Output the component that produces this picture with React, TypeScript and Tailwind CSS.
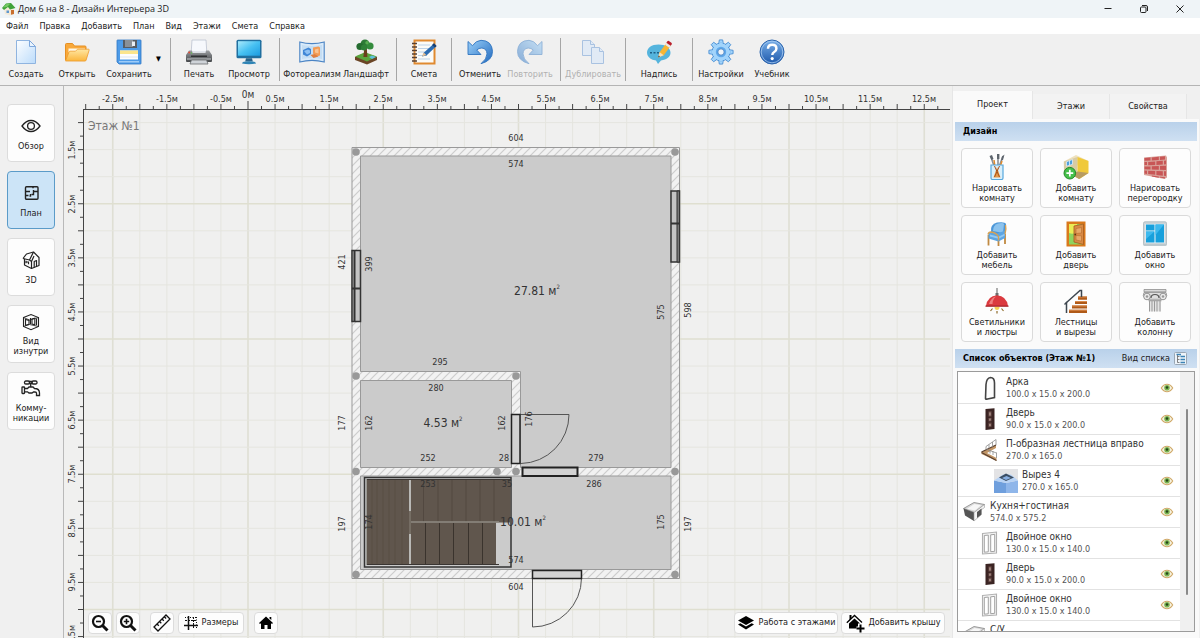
import { useState } from "react";
import type { ReactNode } from "react";
import clsx from "clsx";

const MENU = ["Файл", "Правка", "Добавить", "План", "Вид", "Этажи", "Смета", "Справка"];

/* ---------- toolbar icons ---------- */

function NewIcon() {
  return (
    <svg viewBox="0 0 26 26" className="size-[26px]">
      <defs>
        <linearGradient id="newG" x1="0" y1="0" x2="1" y2="1">
          <stop offset="0" stopColor="#fdfeff" />
          <stop offset="1" stopColor="#bcdcfb" />
        </linearGradient>
      </defs>
      <path d="M3.5 1.5h13l6 6v17h-19z" fill="url(#newG)" stroke="#8fb4e0" />
      <path d="M16.5 1.5v6h6z" fill="#eaf4fe" stroke="#7fa8dc" />
    </svg>
  );
}

function OpenIcon() {
  return (
    <svg viewBox="0 0 26 26" className="size-[26px]">
      <defs>
        <linearGradient id="openG" x1="0" y1="0" x2="0" y2="1">
          <stop offset="0" stopColor="#ffe7a3" />
          <stop offset="1" stopColor="#fbb53c" />
        </linearGradient>
      </defs>
      <path d="M1.500 21V5.500q0-1 1-1h6l2 2.500h10.500q1 0 1 1V12" fill="#f9a93a" stroke="#e58f23" />
      <path d="M4.500 9.500h16.500v4h-16.500z" fill="#fff8e6" />
      <path d="M1.500 22 5 13q.3-.8 1-.8h5.500l2-2h11q.9 0 .6 1l-3 10q-.3.900-1.200.900z" fill="url(#openG)" stroke="#ee9b2c" strokeWidth=".8" />
    </svg>
  );
}

function SaveIcon() {
  return (
    <svg viewBox="0 0 26 26" className="size-[26px]">
      <path d="M1 1.500q0-.5.5-.5h23q.5 0 .5.500v23q0 .5-.5.5H3l-2-2z" fill="#4d9be8" stroke="#2f76c4" strokeWidth=".8" />
      <path d="M7 1h14v8H7z" fill="#575c63" />
      <path d="M9 1h8v7H9z" fill="#8a9097" />
      <path d="M16 2.500h3V7h-3z" fill="#e9eef4" />
      <path d="M4 11.500h18v9H4z" fill="#fdfdfd" />
      <path d="M4 11.500h18v3.500H4z" fill="#fbe58c" />
      <path d="M4 17.500h18v1H4z" fill="#dfe6ee" />
      <path d="M3 22h20v1.500H3z" fill="#9ecbf7" />
    </svg>
  );
}

function PrintIcon() {
  return (
    <svg viewBox="0 0 26 26" className="size-[26px]">
      <defs>
        <linearGradient id="prG" x1="0" y1="0" x2="0" y2="1">
          <stop offset="0" stopColor="#9b9ea1" />
          <stop offset="1" stopColor="#45484b" />
        </linearGradient>
      </defs>
      <path d="M6 1h14l.8 12H5.200z" fill="#f6f8fc" stroke="#bcc3d0" strokeWidth=".8" />
      <path d="M3 11.500h3l.5 2.500h13l.5-2.500h3L26 16v6q0 1-1 1H1q-1 0-1-1v-6z" fill="url(#prG)" />
      <path d="M5 16.500h16v1.500H5z" fill="#2f3133" />
      <path d="M1 19.500h24v1H1z" fill="#c9cccf" />
      <path d="M5.500 21h15l1.500 4H4z" fill="#cfd3d8" stroke="#6a6d70" strokeWidth=".8" />
      <circle cx="3.200" cy="13.500" r="1" fill="#e24b35" />
      <circle cx="5.500" cy="14" r=".7" fill="#5cc24a" />
    </svg>
  );
}

function PreviewIcon() {
  return (
    <svg viewBox="0 0 26 26" className="size-[26px]">
      <defs>
        <linearGradient id="pvG" x1="0" y1="0" x2="1" y2="1">
          <stop offset="0" stopColor="#a9eafc" />
          <stop offset=".5" stopColor="#47c1f2" />
          <stop offset="1" stopColor="#1c9be0" />
        </linearGradient>
      </defs>
      <rect x=".5" y=".8" width="25" height="18.500" rx="1.500" fill="#206f9f" />
      <rect x="2" y="2.200" width="22" height="14.500" fill="url(#pvG)" />
      <path d="M10 19.300h6l.8 3.200H9.200z" fill="#2b6389" />
      <path d="M6 24.500q0-2.200 7-2.200t7 2.200q-7 1.500-14 0z" fill="#2f84b5" />
    </svg>
  );
}

function PhotoIcon() {
  return (
    <svg viewBox="0 0 26 26" className="size-[26px]">
      <path d="M.8 3q12.200 3.200 24.400 0v20q-12.200-3.200-24.400 0z" fill="#d8eafa" stroke="#4b84c4" strokeWidth="1.100" />
      <path d="M3 6q10 2 20 0v14q-10-2-20 0z" fill="#c5def4" />
      <path d="m4 11 5.500-2.500 2.500 1.500v5L8 17.500l-4-2z" fill="#3f86d6" />
      <path d="m5 12 4-1.500 2 1v2.500L8 15.500z" fill="#8dc0f3" />
      <path d="m14 8.500 5.500-1 1.500 1v8l-3.500 1-3.500-3z" fill="#f29b55" />
      <path d="m16 10.500 3.500-1v5l-3.500-1z" fill="#f9c493" />
      <path d="m11.500 16 4-1 4 2.500-5 1.500z" fill="#e07f40" />
    </svg>
  );
}

function LandscapeIcon() {
  return (
    <svg viewBox="0 0 26 26" className="size-[26px]">
      <path d="m2 18 10-4 12 4v3l-10 4.500L2 21z" fill="#6b4526" />
      <path d="m2 17.500 10-4.300 12 4.300-10 5z" fill="#5aa53d" />
      <path d="M11.300 9h2.500l.6 9h-4z" fill="#6b3f1d" />
      <circle cx="12" cy="5" r="4.500" fill="#2c7a36" />
      <circle cx="7" cy="7.500" r="3.600" fill="#246b2f" />
      <circle cx="17" cy="7" r="3.600" fill="#348b3d" />
      <circle cx="11" cy="8.500" r="3" fill="#2f8138" />
      <circle cx="14" cy="3.800" r="1.700" fill="#57ad52" />
      <path d="m16 18 3-1.500 4 1.500-4 2z" fill="#5cc0dd" />
    </svg>
  );
}

function EstimateIcon() {
  return (
    <svg viewBox="0 0 26 26" className="size-[26px]">
      <rect x="3.500" y="1.500" width="20" height="23" fill="#fbfbf8" stroke="#e08a30" strokeWidth="2" />
      <path d="M7 6h12M7 9.500h12M7 13h9M7 16.500h9M7 20h12" stroke="#bcd3ea" strokeWidth="1.200" />
      <g stroke="#574134" strokeWidth="1.300">
        <path d="M1 4.500h5M1 8h5M1 11.500h5M1 15h5M1 18.500h5M1 22h5" />
      </g>
      <path d="m11 17.500 2-4L23 4.500l2.500 2.500-10 9.500z" fill="#2d6db2" />
      <path d="m11 17.500 1.800-4 2.400 2.600z" fill="#ecc392" />
      <path d="m21 6 2-1.800L25.600 7 24 8.500z" fill="#173f73" />
    </svg>
  );
}

function UndoIcon({ flip }: { flip?: boolean }) {
  return (
    <svg viewBox="0 0 26 26" className={clsx("size-[26px]", flip && "-scale-x-100")}>
      <defs>
        <linearGradient id="undoG" x1="0" y1="0" x2="1" y2="1">
          <stop offset="0" stopColor="#9bd0f9" />
          <stop offset="1" stopColor="#1f68be" />
        </linearGradient>
      </defs>
      <path
        d="M1 2.500V15.500H14L9.700 11Q11.800 9 14.800 9 19.800 9.500 20 14.800 20 20 14 24.700 25.500 21.500 25.500 12.500 25 1.500 14 1.300 9 1.500 5.500 6.700z"
        fill="url(#undoG)"
        stroke="#2f74bf"
        strokeWidth=".9"
      />
    </svg>
  );
}

function DuplicateIcon() {
  return (
    <svg viewBox="0 0 26 26" className="size-[26px]">
      <g fill="#d3e6fa" stroke="#6496d4">
        <path d="M2.500 1.500h8l4 4v11h-12z" />
        <path d="M10.500 1.500v4h4" />
        <path d="M11.500 8.500h8l4 4v12h-12z" />
        <path d="M19.500 8.500v4h4" />
      </g>
    </svg>
  );
}

function CaptionIcon() {
  return (
    <svg viewBox="0 0 26 26" className="size-[26px]">
      <path d="M12.500 5.500C5.500 5.500 1 9 1 13.800c0 3 2.200 5.500 5.500 6.900l3.500.8 2 3.500 3-3.600c6-.8 9.500-3.600 9.500-7.600 0-4.800-5-8.300-12-8.300z" fill="#55b4dd" />
      <path d="M4 13h2v1.600H4zM7.500 13h2v1.600h-2zM11 13h2v1.600h-2z" fill="#1f5f86" />
      <path d="m12 18.500 1.700-5.200 6.800-9.500 4.200 3-6.900 9.400z" fill="#f7b633" />
      <path d="m12 18.500 1.700-5.200 4 2.900z" fill="#f5dfba" />
      <path d="m12 18.500.7-2 1.300.9z" fill="#333" />
      <path d="m19 5.700 1.400-2 4.300 3-1.400 2z" fill="#e8e8ea" />
      <path d="m20.400 3.700 1-1.500q.7-.7 1.500-.2l2.500 1.700q.8.7.3 1.500l-1 1.500z" fill="#b91f2c" />
    </svg>
  );
}

function SettingsIcon() {
  const teeth = [0, 45, 90, 135, 180, 225, 270, 315];
  return (
    <svg viewBox="0 0 26 26" className="size-[26px]">
      {teeth.map((a) => (
        <path key={a} d="M10.700 5 11.300.9h3.400l.6 4.100z" fill="#a2d4fb" stroke="#4b90d4" strokeWidth=".9" transform={`rotate(${a} 13 13)`} />
      ))}
      <circle cx="13" cy="13" r="9" fill="#a2d4fb" stroke="#4b90d4" strokeWidth=".9" />
      {teeth.map((a) => (
        <path key={a} d="M11.300 3.500h3.400v3h-3.400z" fill="#a2d4fb" transform={`rotate(${a} 13 13)`} />
      ))}
      <circle cx="13" cy="13" r="5.200" fill="#5fa8ea" />
      <circle cx="13" cy="13" r="3.200" fill="#f0f4f8" stroke="#3578c0" strokeWidth=".8" />
    </svg>
  );
}

function HelpIcon() {
  return (
    <svg viewBox="0 0 26 26" className="size-[26px]">
      <defs>
        <linearGradient id="helpG" x1="0" y1="0" x2="0" y2="1">
          <stop offset="0" stopColor="#7ab0e8" />
          <stop offset="1" stopColor="#1d58ab" />
        </linearGradient>
      </defs>
      <circle cx="13" cy="13" r="12" fill="url(#helpG)" stroke="#2e66ae" />
      <circle cx="13" cy="13" r="10.800" fill="none" stroke="#a9cdf2" strokeWidth=".8" />
      <path d="M9 9.800q0-4 4.200-4t4.200 3.700q0 2.300-2.200 3.500-1.900 1-1.900 3" fill="none" stroke="#fff" strokeWidth="2.500" />
      <circle cx="13.200" cy="19.600" r="1.600" fill="#fff" />
    </svg>
  );
}

/* ---------- design panel icons ---------- */

function BrushesIcon() {
  return (
    <svg viewBox="0 0 26 26" className="size-[26px]">
      <path d="m10 12-3-9M14 12V3M15 13l4-11" stroke="#8a8f96" strokeWidth="1.600" />
      <path d="M5.500 2 8 1l1.500 4-2 1zM13 0h2.400v5H13zM18 2.500 20.500.500 19 6l-2 .5z" fill="#5e656d" />
      <path d="m11 13-1-7M16 13l2-6" stroke="#e08b2c" strokeWidth="1.500" />
      <path d="M7 11h12v13q0 1.500-1.500 1.500h-9Q7 25.500 7 24z" fill="#d9effb" stroke="#57a7dc" strokeWidth="1.200" />
      <path d="M9.500 23.500 13 13l3.500 10.500z" fill="#e69a4a" />
      <path d="m10.500 12 5 11M15.500 12l-5 11" stroke="#a8521c" strokeWidth="1" />
    </svg>
  );
}

function AddRoomIcon() {
  return (
    <svg viewBox="0 0 26 26" className="size-[26px]">
      <path d="M.8 7.500 13 1l12.500 6-11 4.500z" fill="#efe2bd" />
      <path d="M.8 7.500 14.500 3v17.500L9 24l-8-6z" fill="#d8cba4" />
      <path d="m14.500 3 11 4v12l-9 6-8-4.500 6-2.500z" fill="#f0c93a" />
      <path d="m14.500 17.500 11 1.500-9.500 6-8-4.500z" fill="#b79b62" />
      <path d="m3.500 7.800 6-2.300v4.800l-6 1.900z" fill="#4fa1dc" stroke="#e9f3fa" strokeWidth=".7" />
      <path d="M6.500 6.600v4.700" stroke="#e9f3fa" strokeWidth=".8" />
      <circle cx="6.800" cy="19.200" r="5.800" fill="#45c04a" stroke="#268a2b" />
      <path d="M6.800 15.800v6.800M3.400 19.200h6.800" stroke="#fff" strokeWidth="1.700" />
    </svg>
  );
}

function BricksIcon() {
  return (
    <svg viewBox="0 0 26 26" className="size-[26px]">
      <path d="m2 3.500 22-2 1 2v20l-2.500 1.500L2 21z" fill="#d9a29a" />
      <g fill="#c85656">
        <path d="m2.500 4 6-.5v3l-6 .3zM9.800 3.400l7-.6v3.200l-7 .5zM18 2.700l5-.5v3.300l-5 .4z" />
        <path d="m2.500 8 2.500-.1v3.200H2.500zM6.200 7.900l7-.5v3.500l-7 .3zM14.400 7.300l6.400-.5v3.700l-6.400.4zM22 6.700l2-.1v3.700l-2 .1z" />
        <path d="M2.500 12.400h6v3l-6-.2zM9.800 12.300l7-.3v3.700l-7-.2zM18 12l6-.3v4.200l-6-.1z" />
        <path d="m2.500 16.600 2.500.1V20l-2.500-.4zM6.200 16.800l7 .2v3.800l-7-.8zM14.400 17l6.400.2v4.500l-6.400-.8zM22 17.200l2 .1v4.600l-2-.2z" />
        <path d="m9.800 21.600 7 1v1.200l-7-1.300zM18 22.700l5 .6v1.300l-5-1z" />
      </g>
    </svg>
  );
}

function ArmchairIcon() {
  return (
    <svg viewBox="0 0 26 26" className="size-[26px]">
      <path d="M4.500 14v10.500M14.500 18.500V25M21 13v10" stroke="#c08a42" strokeWidth="1.800" />
      <path d="M7 11Q6 3 13 1.500q8-1.200 9 1.500l-1 11-8 3z" fill="#4c97d8" />
      <path d="M9 10q0-6 5-7.500 5.500-1 6 .5L19 12z" fill="#8cc3ee" />
      <path d="M4.500 12.500q2-2 5-1.500l4 1.500 7.500-3v7.500l-6.500 3.500-10-3z" fill="#5da5e2" />
      <path d="m6 13.500 8.500 2.200 6-3v2l-6 3-8.500-2.200z" fill="#94c9f2" />
      <path d="M4 13.500q.5-2.500 3-2.500 5 .5 7.500 4.500v4M21.500 4q1 4-.5 9" fill="none" stroke="#d7a154" strokeWidth="1.400" />
    </svg>
  );
}

function DoorAddIcon() {
  return (
    <svg viewBox="0 0 26 26" className="size-[26px]">
      <path d="M3.500.5h19v25h-19z" fill="#d9791c" />
      <path d="M6 3h14v20.500H6z" fill="#8fd35c" />
      <path d="M6 3h8v8q-4 3-8 1z" fill="#e9ec54" />
      <path d="m11 5 9.500-2v20.500L11 21z" fill="#d98a45" stroke="#a75c1e" strokeWidth=".8" />
      <path d="m13 7.500 5.500-1V12l-5.500.5zM13 14.500l5.500.300v5.400L13 19z" fill="#e8a768" stroke="#b76c2c" strokeWidth=".6" />
      <circle cx="12.300" cy="13.500" r=".9" fill="#5b3512" />
    </svg>
  );
}

function WindowAddIcon() {
  return (
    <svg viewBox="0 0 26 26" className="size-[26px]">
      <rect x="1.500" y=".8" width="23" height="23.500" rx="1.500" fill="#ccd5d9" stroke="#a9b5ba" strokeWidth=".8" />
      <rect x="3.500" y="3" width="19" height="19" fill="#eef4f7" />
      <path d="M4 3.500h8.500v6H4zM4 10.500h8.500v11H4zM13.500 3.500H22v18h-8.500z" fill="#17a0dc" />
      <path d="M4 10.500h8.500L4 18zM13.500 3.500H22L13.500 14z" fill="#3cb9ee" />
      <path d="M1.500 23h23v1.800h-23z" fill="#bcc8cd" />
    </svg>
  );
}

function LampIcon() {
  return (
    <svg viewBox="0 0 26 26" className="size-[26px]">
      <path d="M13 0v7" stroke="#8c8c8c" strokeWidth="1.400" />
      <path d="M11.500 5h3v3h-3z" fill="#6c6c6c" />
      <path d="M2 18Q3.500 8 13 7.300 22.500 8 24 18z" fill="#db3a3f" />
      <path d="M5 16q2-6.500 7-7.500-3.500 3-3.500 7.500z" fill="#ee7f7f" />
      <path d="M1.500 17.500h23v1.300h-23z" fill="#a62328" />
      <path d="M10.500 19h5q0 3-2.500 3t-2.500-3z" fill="#f5cf55" />
      <path d="M8.500 20.500 6.500 23M17.500 20.500l2 2.500M13 23v2.500" stroke="#8f6c2a" strokeWidth="1.200" />
    </svg>
  );
}

function StairsIcon() {
  return (
    <svg viewBox="0 0 26 26" className="size-[26px]">
      <path d="M15 8.500h9v3.200h-9zM12 13h12v3H12zM9 17.500h15v3H9zM6 21.800h18V25H6z" fill="#b05a18" />
      <path d="M15 8.500h9v.9h-9zM12 13h12v.9H12zM9 17.500h15v.9H9zM6 21.800h18v.9H6z" fill="#d98a4b" />
      <path d="M3.500 25V14.500L17 2.500h1.500V9" fill="none" stroke="#3e4750" strokeWidth="1.500" />
      <path d="m1.500 16.500 2.500-2.500" stroke="#3e4750" strokeWidth="1.500" />
    </svg>
  );
}

function ColumnIcon() {
  return (
    <svg viewBox="0 0 26 26" className="size-[26px]">
      <path d="M2 1.500h22v2.300H2z" fill="#d9d9d9" stroke="#8f8f8f" strokeWidth=".8" />
      <path d="M2 4.500h22q2 3-1 6l-4 .8H7L3 10.500q-3-3-1-6z" fill="#dedede" stroke="#8f8f8f" strokeWidth=".8" />
      <circle cx="5" cy="8.500" r="3.300" fill="#ececec" stroke="#8a8a8a" strokeWidth=".9" />
      <circle cx="5" cy="8.500" r="1.300" fill="#999" />
      <circle cx="21" cy="8.500" r="3.300" fill="#ececec" stroke="#8a8a8a" strokeWidth=".9" />
      <circle cx="21" cy="8.500" r="1.300" fill="#999" />
      <path d="M9 10q0-3.500 4-3.500t4 3.500" fill="none" stroke="#555" strokeWidth="1.200" />
      <path d="M7 13h12v10.500H7z" fill="#e4e4e4" />
      <path d="M7.500 13v10.500M10 13v10.500M12.500 13v10.500M15 13v10.500M18 13v10.500" stroke="#9a9a9a" strokeWidth="1" />
      <path d="M6.500 12h13v1.300h-13z" fill="#a5a5a5" />
    </svg>
  );
}

/* ---------- left mode icons ---------- */

function EyeLineIcon() {
  return (
    <svg viewBox="0 0 20 20" className="size-5" fill="none" stroke="#222" strokeWidth="1.300">
      <path d="M1 10q4-5.500 9-5.500t9 5.500q-4 5.500-9 5.500T1 10z" />
      <circle cx="10" cy="10" r="3.400" />
    </svg>
  );
}

function PlanLineIcon() {
  return (
    <svg viewBox="0 0 20 20" className="size-5" fill="none" stroke="#222" strokeWidth="1.400">
      <rect x="4.500" y="3.800" width="12.500" height="12.500" rx="1" />
      <path d="M4.500 8.500H9M12 3.800v1.500M17 8.500h-4.500v3h-2M4.500 12.500h3M9.500 11v2h-1M12.500 8.500V7" />
    </svg>
  );
}

function HouseLineIcon() {
  return (
    <svg viewBox="0 0 20 20" className="size-5" fill="none" stroke="#222" strokeWidth="1.200" strokeLinejoin="round">
      <path d="M2 8.500 5.500 4l7-2 5.500 5.500v8L10.500 18.500 3.500 15V8.800" />
      <path d="M2 8.500 8.500 10l4-8M8.500 10l2 1.500v7M10.500 11.500 13 6" />
      <path d="M13.200 17.500v-6l2.300-1v6M5 10.800v2.500M7.500 11.500v2.800M5 12h2.500" />
    </svg>
  );
}

function InsideLineIcon() {
  return (
    <svg viewBox="0 0 20 20" className="size-5" fill="none" stroke="#222" strokeWidth="1.100">
      <path d="M2.500 5.500 10 2.500l7.500 3v9L10 17.700l-7.500-3.200z" />
      <path d="M2.500 5.500 8.500 8l9-2.500M2.500 14.500l6-2 9 2" strokeWidth=".8" />
      <path d="M4.500 7.500v5.800l3.500-1V8.500zM9.500 6v6M11 7v5l2.800.7V6.300zM15.500 6.500v6.700" />
    </svg>
  );
}

function TapLineIcon() {
  return (
    <svg viewBox="0 0 20 20" className="size-5" fill="none" stroke="#222" strokeWidth="1.300">
      <rect x="3.500" y="2" width="5" height="3" rx="1.300" />
      <rect x="11" y="2" width="5" height="3" rx="1.300" />
      <path d="M8.500 2.500h2.500v2H8.500zM9.700 5v3" />
      <rect x="1" y="8" width="2.500" height="6.500" rx=".5" />
      <path d="M3.500 9.500h3L8 8h4l1.500 1.500q5 0 5 4.500v2.500h-3V14q0-1-1.500-1h-1.500L11 14H8l-1.500-1.200h-3" />
    </svg>
  );
}

/* ---------- object list icons ---------- */

function ListEye() {
  return (
    <svg viewBox="0 0 14 10" className="h-[10px] w-[14px]">
      <path d="M1.300 5Q3.500 1.300 7 1.300T12.700 5Q10.500 8.700 7 8.700T1.300 5z" fill="#f6f3e0" stroke="#cfa766" strokeWidth="1.100" />
      <circle cx="7" cy="4.800" r="2.800" fill="#7db552" />
      <circle cx="7" cy="4.500" r="1.300" fill="#24451c" />
    </svg>
  );
}

function ArchThumb() {
  return (
    <svg viewBox="0 0 24 24" className="size-6" fill="none">
      <path d="m7.500 22.500.5-14Q8.500 2 12.500 1.500q4 0 4 5.500v14.500l-7 1.500q-2 .5-2-.5z" stroke="#444" strokeWidth="1.600" fill="#fdfdfd" />
    </svg>
  );
}

function DoorThumb() {
  return (
    <svg viewBox="0 0 24 24" className="size-6">
      <path d="m7.500 2 9-.8V22l-9 1z" fill="#3b2423" />
      <path d="m10.500 4.500 3-.3v5.200l-3 .2zM10.500 11l3-.2v3.500l-3 .2zM10.500 15.800l3-.2v4.200l-3 .4z" fill="#6d4f4a" />
      <path d="m11.300 5.500 1.300-.1v3l-1.300.1zM11.300 11.700l1.300-.1v2l-1.300.1zM11.300 17l1.300-.1v2l-1.300.1z" fill="#b59b95" />
    </svg>
  );
}

function StairThumb() {
  return (
    <svg viewBox="0 0 24 24" className="size-6" fill="none">
      <path d="m3.500 14 14.500-7v3L9 15l9.500 5v3L3.500 16z" fill="#c29666" />
      <path d="m3.500 14.500 15 8M3.500 14 18 7" stroke="#5a4030" strokeWidth="1.300" />
      <path d="M8 12V8.500M11 10.500V6.500M14.500 9V4M18 7V1.500M8 8.500l10-7M12 15.500V12M15 17v-4M18.500 20v-5.500M9 11.500l9.500 3.500" stroke="#8a8a8a" strokeWidth=".8" />
    </svg>
  );
}

function CutThumb() {
  return (
    <svg viewBox="0 0 24 24" className="size-6">
      <path d="M0 0h24v24H0z" fill="#e3e3e5" />
      <path d="M0 11.500 12 14v10H0z" fill="#6f9fdd" />
      <path d="M24 11.500 12 14v10h12z" fill="#8fb6ea" />
      <path d="m0 11.500 9-6h8l7 6L12 14z" fill="#b8d3f5" />
      <path d="m5 8.500 7-4 8 4-8 3.500z" fill="#3c4e63" />
      <path d="m8 9 4.500-2 4.500 2-5 2z" fill="#87aee0" />
    </svg>
  );
}

function RoomThumb() {
  return (
    <svg viewBox="0 0 24 24" className="size-6">
      <path d="M1.500 8.500 12 2.500l10.500 2-10 8z" fill="#d9d9d9" stroke="#777" strokeWidth=".7" />
      <path d="M5 8.800 12.500 4l6.500 1.300-6 5.200z" fill="#f7f7f7" />
      <path d="m1.500 8.500 10.500 4v8.500L3 15.500z" fill="#555" />
      <path d="m12 12.500 10.500-8v3L19 10v5l-7 6z" fill="#f5f5f5" stroke="#9a9a9a" strokeWidth=".6" />
      <path d="m15 12 4.500-3.500v6L15 18z" fill="#555" />
    </svg>
  );
}

function WindowThumb() {
  return (
    <svg viewBox="0 0 24 24" className="size-6">
      <path d="m4.500 2.500 14-1.500v21l-14 1z" fill="#f2f2f2" stroke="#b0b0b0" strokeWidth="1.100" />
      <path d="m6.300 4.500 4-.4v16.700l-4 .4zM12.700 3.800l4-.4v16.900l-4 .4z" fill="#fff" stroke="#999" strokeWidth=".9" />
    </svg>
  );
}

/* ---------- data ---------- */

type Tool = { label: string; icon: ReactNode; width: string; disabled?: boolean; arrow?: boolean };

const TOOL_GROUPS: Tool[][] = [
  [
    { label: "Создать", icon: <NewIcon />, width: "w-[52px]" },
    { label: "Открыть", icon: <OpenIcon />, width: "w-[50px]" },
    { label: "Сохранить", icon: <SaveIcon />, width: "w-[54px]", arrow: true },
  ],
  [
    { label: "Печать", icon: <PrintIcon />, width: "w-[48px]" },
    { label: "Просмотр", icon: <PreviewIcon />, width: "w-[52px]" },
  ],
  [
    { label: "Фотореализм", icon: <PhotoIcon />, width: "w-[56px]" },
    { label: "Ландшафт", icon: <LandscapeIcon />, width: "w-[52px]" },
  ],
  [{ label: "Смета", icon: <EstimateIcon />, width: "w-[46px]" }],
  [
    { label: "Отменить", icon: <UndoIcon />, width: "w-[48px]" },
    { label: "Повторить", icon: <UndoIcon flip />, width: "w-[52px]", disabled: true },
  ],
  [{ label: "Дублировать", icon: <DuplicateIcon />, width: "w-[56px]", disabled: true }],
  [{ label: "Надпись", icon: <CaptionIcon />, width: "w-[58px]" }],
  [
    { label: "Настройки", icon: <SettingsIcon />, width: "w-[48px]" },
    { label: "Учебник", icon: <HelpIcon />, width: "w-[54px]" },
  ],
];

const MODES = [
  { id: "view", lines: ["Обзор"], icon: <EyeLineIcon /> },
  { id: "plan", lines: ["План"], icon: <PlanLineIcon /> },
  { id: "3d", lines: ["3D"], icon: <HouseLineIcon /> },
  { id: "inside", lines: ["Вид", "изнутри"], icon: <InsideLineIcon /> },
  { id: "pipes", lines: ["Комму-", "никации"], icon: <TapLineIcon /> },
];

const ACTIONS = [
  { lines: ["Нарисовать", "комнату"], icon: <BrushesIcon /> },
  { lines: ["Добавить", "комнату"], icon: <AddRoomIcon /> },
  { lines: ["Нарисовать", "перегородку"], icon: <BricksIcon /> },
  { lines: ["Добавить", "мебель"], icon: <ArmchairIcon /> },
  { lines: ["Добавить", "дверь"], icon: <DoorAddIcon /> },
  { lines: ["Добавить", "окно"], icon: <WindowAddIcon /> },
  { lines: ["Светильники", "и люстры"], icon: <LampIcon /> },
  { lines: ["Лестницы", "и вырезы"], icon: <StairsIcon /> },
  { lines: ["Добавить", "колонну"], icon: <ColumnIcon /> },
];

const OBJECTS = [
  { name: "Арка", size: "100.0 x 15.0 x 200.0", level: 1, icon: <ArchThumb /> },
  { name: "Дверь", size: "90.0 x 15.0 x 200.0", level: 1, icon: <DoorThumb /> },
  { name: "П-образная лестница вправо", size: "270.0 x 165.0", level: 1, icon: <StairThumb /> },
  { name: "Вырез 4", size: "270.0 x 165.0", level: 2, icon: <CutThumb /> },
  { name: "Кухня+гостиная", size: "574.0 x 575.2", level: 0, icon: <RoomThumb /> },
  { name: "Двойное окно", size: "130.0 x 15.0 x 140.0", level: 1, icon: <WindowThumb /> },
  { name: "Дверь", size: "90.0 x 15.0 x 200.0", level: 1, icon: <DoorThumb /> },
  { name: "Двойное окно", size: "130.0 x 15.0 x 140.0", level: 1, icon: <WindowThumb /> },
  { name: "С/У", size: "280.0 x 162.0", level: 0, icon: <RoomThumb /> },
];

const INDENT = ["pl-1", "pl-5", "pl-9"];

/* ---------- drawing ---------- */

const METER = 54.1;
const ZERO_X = 184;
const ZERO_Y = -17.5;

// [text, x, y, vertical]
const DIMENSIONS: [string, number, number, boolean?][] = [
  ["604", 452, 52],
  ["574", 452, 78],
  ["421", 278, 176, true],
  ["399", 305, 178, true],
  ["575", 597, 226, true],
  ["598", 624, 224, true],
  ["295", 376, 276],
  ["280", 372, 302],
  ["177", 278, 337, true],
  ["162", 305, 337, true],
  ["162", 438, 337, true],
  ["176", 465, 333, true],
  ["252", 364, 372],
  ["28", 440, 372],
  ["279", 532, 372],
  ["253", 364, 398],
  ["35", 443, 398],
  ["286", 530, 398],
  ["197", 278, 438, true],
  ["174", 305, 436, true],
  ["175", 597, 436, true],
  ["197", 624, 438, true],
  ["574", 452, 474],
  ["604", 452, 501],
];

const AREAS: [string, number, number][] = [
  ["27.81", 473, 205],
  ["4.53", 379, 337],
  ["10.01", 459, 436],
];

const NODES = [
  [292, 66], [611, 66], [292, 290], [452, 290], [292, 385.5],
  [433, 385.5], [452, 385.5], [611, 385.5], [292, 488.5], [611, 488.5],
];

const range = (from: number, to: number) => Array.from({ length: to - from + 1 }, (_, i) => from + i);

function Rulers() {
  return (
    <g>
      {range(-12, 51).map((q) => {
        const x = ZERO_X + (q * METER) / 4;
        const len = q === 0 ? 8 : q % 2 === 0 ? 5 : 3;
        return <path key={q} d={`M${x} ${23 - len}V23`} stroke="#444" />;
      })}
      {range(4, 44).map((q) => {
        const y = ZERO_Y + (q * METER) / 4;
        if (y < 23) return null;
        return <path key={q} d={`M${19 - (q % 2 === 0 ? 5 : 3)} ${y}H19`} stroke="#444" />;
      })}
      <path d="M19 23.500H886M19.500 23V700" stroke="#444" fill="none" />
      <text x={ZERO_X} y={12} textAnchor="middle" className="text-[10px]" fill="#333">0м</text>
      {range(-3, 12).map((m) => (
        <text key={m} x={Math.round(ZERO_X + (m + 0.5) * METER)} y={16} textAnchor="middle" fill="#333">
          {(m + 0.5).toFixed(1)}м
        </text>
      ))}
      {range(1, 10).map((m) => {
        const y = Math.round(ZERO_Y + (m + 0.5) * METER);
        return (
          <text key={m} x={11} y={y} textAnchor="middle" transform={`rotate(-90 11 ${y})`} fill="#333">
            {(m + 0.5).toFixed(1)}м
          </text>
        );
      })}
    </g>
  );
}

function Grid() {
  return (
    <g>
      {range(-5, 25).map((h) => {
        const x = ZERO_X + (h * METER) / 2;
        return <path key={h} d={`M${x} 24V700`} stroke={h % 5 === 0 ? "#dfdfd4" : "#e5e5df"} strokeWidth={h % 5 === 0 ? 1.6 : 1} />;
      })}
      {range(2, 21).map((h) => {
        const y = ZERO_Y + (h * METER) / 2;
        return <path key={h} d={`M20 ${y}H886`} stroke={h % 5 === 0 ? "#dfdfd0" : "#e5e5df"} strokeWidth={h % 5 === 0 ? 1.6 : 1} />;
      })}
    </g>
  );
}

function FloorPlan() {
  return (
    <g>
      <defs>
        <pattern id="hatch" width="8" height="8" patternUnits="userSpaceOnUse">
          <path d="M0 0h8v8H0z" fill="#f2f2f2" />
          <path d="M-2 10 10-2M-2 2l4-4M6 10l4-4" stroke="#cdcdcd" strokeWidth="1.200" />
        </pattern>
      </defs>
      {/* walls and rooms */}
      <path d="M288 61.500h327.500v431H288z" fill="url(#hatch)" stroke="#999" />
      <g fill="#cbcbcb" stroke="#999">
        <path d="M296.500 70h310.500v311.500H456.500v-96H296.500z" />
        <path d="M296.500 294.500h151v87h-151z" />
        <path d="M296.500 390h310.500v93.500H296.500z" />
      </g>
      {NODES.map(([x, y]) => (
        <circle key={`${x}-${y}`} cx={x} cy={y} r="3.800" fill="#999" />
      ))}

      {/* staircase */}
      <path d="M300.500 391.500h146.500v89.500H300.500z" fill="#cbcbcb" stroke="#333" strokeWidth="1.500" />
      <path d="M302.500 393h144v43.500H432V479H302.500z" fill="#60564d" />
      <path d="M302.500 393v86" stroke="#9b9b95" />
      <path d="M308 394v84M313 394v84M319 394v84M325 394v84M331 394v84M338 394v84" stroke="#594e45" />
      <path d="M359.500 394v42M374 394v42M388 394v42M402 394v42M416 394v42M430 394v42" stroke="#524840" />
      <path d="M361.500 437v41M375.500 437v41M389.500 437v41M404.500 437v41M418.500 437v41" stroke="#3a332d" />
      <path d="M346 394v31M346 448v31" stroke="#b9b9b6" strokeWidth="2" />
      <path d="M346 425v23" stroke="#8a857c" />
      <path d="M347 436h88" stroke="#8f8b83" strokeWidth="1.500" />
      <path d="M303 393.500h144M303 478.500h132" stroke="#3a3532" />

      {/* windows */}
      <g fill="#c4c4c4" stroke="#333">
        <path d="M288 164.500h8.500v71H288z" strokeWidth="1.500" />
        <path d="M288 202.500h8.500" strokeWidth="2" />
        <path d="M290.500 164.500v71" strokeWidth="2" />
        <path d="M607 105h8.500v71H607z" strokeWidth="1.500" />
        <path d="M613 105h2.500v71H613z" fill="#777" />
        <path d="M607 137.500h8.500" strokeWidth="2" />
      </g>

      {/* doors */}
      <g fill="none" stroke="#555">
        <path d="M456.500 328.500H505A49 49 0 0 1 457 377.500" />
        <path d="M468.500 492v49A49 49 0 0 0 517.500 492" />
      </g>
      <g fill="#d2d2d2" stroke="#222" strokeWidth="1.500">
        <path d="M447.500 328.500h8.500v49h-8.500z" />
        <path d="M458.500 381.500h55v8.500h-55z" strokeWidth="2" />
        <path d="M468.500 484.500h49v8h-49z" />
      </g>

      <g fill="#333">
        {DIMENSIONS.map(([text, x, y, vertical], i) => (
          <text key={i} x={x} y={y} textAnchor="middle" dominantBaseline="central" transform={vertical ? `rotate(-90 ${x} ${y})` : undefined}>
            {text}
          </text>
        ))}
        {AREAS.map(([text, x, y]) => (
          <text key={text} x={x} y={y} textAnchor="middle" dominantBaseline="central" className="text-[12px]">
            {text} м
            <tspan className="text-[6px]" dy={-5}>2</tspan>
          </text>
        ))}
      </g>
    </g>
  );
}

/* ---------- page parts ---------- */

function TitleBar() {
  return (
    <header className="flex h-[18px] items-center bg-[#eff4f7] pl-0.5">
      <svg viewBox="0 0 14 14" className="mr-0.5 size-3.5">
        <path d="m2 7 5-2 5 2v5l-4 1.500L3 12z" fill="#f3e9d8" />
        <path d="M0 6 4 1.500 9 1l4.500 5L8 7.500 6 5 2 8z" fill="#3ea23a" />
        <path d="M1 5.500 4.500 2 8 2 5 5z" fill="#75c963" />
        <path d="M9 8h3v4l-3 .8z" fill="#c96f2e" />
        <path d="M4.500 8.500h2.500V11H4.500z" fill="#5d97cf" />
      </svg>
      <h1 className="flex-1 font-['Open_Sans',sans-serif] leading-4 text-[#222]">Дом 6 на 8 - Дизайн Интерьера 3D</h1>
      <button aria-label="Свернуть" className="flex h-full w-9 items-center justify-center">
        <svg viewBox="0 0 10 10" className="size-2.5"><path d="M1.500 4.500h7" stroke="#222" /></svg>
      </button>
      <button aria-label="Развернуть" className="flex h-full w-9 items-center justify-center">
        <svg viewBox="0 0 10 10" className="size-2.5" fill="none" stroke="#222">
          <rect x="1.500" y="3" width="5.500" height="5.500" rx="1" />
          <path d="M3 1.500h4q1.500 0 1.500 1.500v4" />
        </svg>
      </button>
      <button aria-label="Закрыть" className="mr-0.5 flex h-full w-9 items-center justify-center">
        <svg viewBox="0 0 10 10" className="size-2.5"><path d="m1.500 1.500 7 7m0-7-7 7" stroke="#222" /></svg>
      </button>
    </header>
  );
}

function Toolbar() {
  return (
    <div className="flex h-[52px] items-stretch border-b border-[#b4b4b4] bg-[#f0f0f0]" role="toolbar">
      {TOOL_GROUPS.map((group, gi) => (
        <div key={gi} className="flex">
          {gi > 0 && <div className="mx-1 mt-1 mb-1 w-px bg-[#a6a6a6]" />}
          {group.map((tool) => (
            <div key={tool.label} className="flex">
              <button
                disabled={tool.disabled}
                className={clsx("flex flex-col items-center pt-[5px] whitespace-nowrap", tool.width, tool.disabled ? "text-[#b0b0b0]" : "text-[#222]")}
              >
                <span className={clsx(tool.disabled && "opacity-50")}>{tool.icon}</span>
                <span className="mt-[3px] leading-3">{tool.label}</span>
              </button>
              {tool.arrow && (
                <button aria-label="Варианты сохранения" className="w-2.5 text-left text-[7px] leading-none text-black">
                  ▼
                </button>
              )}
            </div>
          ))}
        </div>
      ))}
    </div>
  );
}

function ModeBar({ mode, setMode }: { mode: string; setMode: (m: string) => void }) {
  return (
    <nav className="flex w-16 flex-col gap-[9px] border-r border-[#b9b9b9] pt-[18px] pl-[7px]">
      {MODES.map((m) => (
        <button
          key={m.id}
          onClick={() => setMode(m.id)}
          className={clsx(
            "flex h-[58px] w-12 flex-col items-center justify-center rounded border",
            m.lines.length === 1 ? "gap-[5px]" : "gap-1",
            mode === m.id ? "border-[#5b9bc8] bg-[#cce4f7]" : "border-[#dcdcdc] bg-[#fdfdfd]"
          )}
        >
          {m.icon}
          <span className="leading-[10px] text-[#222]">
            {m.lines.map((l) => (
              <span key={l} className="block">{l}</span>
            ))}
          </span>
        </button>
      ))}
    </nav>
  );
}

const FLOAT_BTN = "flex h-[22px] items-center justify-center gap-1 rounded border border-[#dcdcdc] bg-[#fdfdfd] whitespace-nowrap text-[#222]";

function CanvasButtons() {
  return (
    <div className="absolute inset-x-0 bottom-1 flex items-center pr-[7px] pl-6">
      <button aria-label="Уменьшить" className={clsx(FLOAT_BTN, "w-6")}>
        <svg viewBox="0 0 18 18" className="size-[18px]" fill="none" stroke="#111" strokeWidth="2.200">
          <circle cx="7.500" cy="7.500" r="5.500" />
          <path d="m11.500 11.500 5 5" strokeWidth="3" />
          <path d="M5 7.500h5" strokeWidth="1.600" />
        </svg>
      </button>
      <button aria-label="Увеличить" className={clsx(FLOAT_BTN, "ml-1 w-6")}>
        <svg viewBox="0 0 18 18" className="size-[18px]" fill="none" stroke="#111" strokeWidth="2.200">
          <circle cx="7.500" cy="7.500" r="5.500" />
          <path d="m11.500 11.500 5 5" strokeWidth="3" />
          <path d="M4.800 7.500h5.400M7.500 4.800v5.400" strokeWidth="1.600" />
        </svg>
      </button>
      <button aria-label="Линейка" className={clsx(FLOAT_BTN, "ml-2.5 w-6")}>
        <svg viewBox="0 0 18 18" className="size-[18px]" fill="none" stroke="#111" strokeWidth="1.300">
          <path d="M1 13 13 1l4 4L5 17z" />
          <path d="m4 10 1.800 1.800M6.500 7.500l1.800 1.800M9 5l1.800 1.800M11.300 2.700l1.800 1.800" />
        </svg>
      </button>
      <button className={clsx(FLOAT_BTN, "ml-1 w-[66px]")}>
        <svg viewBox="0 0 14 14" className="size-3.5" fill="none" stroke="#111">
          <path d="M4.500 0v14M0 9.500h14" strokeWidth="1.500" />
          <path d="M9.500 1v12M1 4.500h12" strokeDasharray="2 1" />
          <path d="M1 1.500h12M12.500 1v12" strokeDasharray="1 1.500" />
        </svg>
        Размеры
      </button>
      <button aria-label="Домой" className={clsx(FLOAT_BTN, "ml-2.5 w-6")}>
        <svg viewBox="0 0 16 16" className="size-4" fill="#000">
          <path d="M8 1.500 15 8l-1 1-1-.8V14H9.500v-4h-3v4H3V8.200L2 9 1 8z" />
          <path d="M11.500 2h1.800v3l-1.800-1.500z" />
        </svg>
      </button>
      <div className="flex-1" />
      <button className={clsx(FLOAT_BTN, "w-26")}>
        <svg viewBox="0 0 18 16" className="h-4 w-[18px]" fill="#000">
          <path d="m9 1 8 4.500L9 10 1 5.500z" />
          <path d="m1 9.500 2.300-1.300L9 11.400l5.700-3.200L17 9.500 9 14.500z" />
        </svg>
        Работа с этажами
      </button>
      <button className={clsx(FLOAT_BTN, "ml-[3px] w-26")}>
        <svg viewBox="0 0 19 19" className="size-[19px]" fill="#000">
          <path d="m3 9.500 5.500-5L14 9.500h-2v5H3z" />
          <path d="M.8 8.700 8.500 1.500l7.500 7" fill="none" stroke="#000" strokeWidth="1.300" />
          <path d="M3.500 1h2v3.500l-2 1.800z" />
          <path d="M14.500 10.500v8M10.500 14.500h8" stroke="#fdfdfd" strokeWidth="4" />
          <path d="M14.500 10.500v8M10.500 14.500h8" stroke="#000" strokeWidth="2" />
        </svg>
        Добавить крышу
      </button>
    </div>
  );
}

function PlanCanvas() {
  return (
    <main className="relative min-w-0 flex-1 overflow-hidden bg-[#f0f0ef]">
      <svg className="absolute inset-0 size-full text-[9px]">
        <Grid />
        <Rulers />
        <text x="24" y="44" className="text-[12px]" fill="#777">Этаж №1</text>
        <FloorPlan />
      </svg>
      <CanvasButtons />
    </main>
  );
}

const SECTION = "mx-0.5 flex h-[19px] items-center bg-linear-to-b from-[#b9d1ea] to-[#cfe0f2] pl-2";

function SidePanel() {
  const [tab, setTab] = useState("Проект");
  return (
    <aside className="flex w-[248px] flex-col border-l border-[#e6e6e6] bg-[#f0f0f0] pt-[5px] pr-px">
      <div className="flex items-end" role="tablist">
        {["Проект", "Этажи", "Свойства"].map((t) => (
          <button
            key={t}
            role="tab"
            aria-selected={tab === t}
            onClick={() => setTab(t)}
            className={clsx("border-r border-[#e6e6e6] text-[#222]", tab === t ? "h-7 w-20 bg-[#fafafa]" : "h-[25px] w-[77px] bg-[#f3f3f3]")}
          >
            {t}
          </button>
        ))}
      </div>
      <div className="flex min-h-0 flex-1 flex-col bg-[#fafafa] pt-[3px] pb-1.5">
        <h2 className={clsx(SECTION, "font-bold text-black")}>Дизайн</h2>
        <div className="grid grid-cols-3 gap-[7px] px-2 py-[7px]">
          {ACTIONS.map((a) => (
            <button key={a.lines.join()} className="flex h-[60px] flex-col items-center gap-[3px] rounded border border-[#dadada] bg-[#fdfdfd] pt-[5px] text-[#222]">
              {a.icon}
              <span className="leading-[10px]">
                {a.lines.map((l) => (
                  <span key={l} className="block whitespace-nowrap">{l}</span>
                ))}
              </span>
            </button>
          ))}
        </div>
        <div className={SECTION}>
          <h2 className="flex-1 font-bold text-black">Список объектов (Этаж №1)</h2>
          <button className="mr-2.5 flex items-center gap-1 text-[#222]">
            Вид списка
            <svg viewBox="0 0 13 13" className="size-[13px]">
              <rect x=".5" y=".5" width="12" height="12" rx="1" fill="#eef4fa" stroke="#9aa7b4" />
              <path d="M3.500 2v8.500h2M3.500 4.500h2M3.500 7.500h2" fill="none" stroke="#666" strokeWidth=".8" />
              <path d="M6.500 4.500H11M6.500 7.500H11M6.500 10.500H11M2.500 2.500H7" stroke="#3b82b5" strokeWidth="1.300" />
            </svg>
          </button>
        </div>
        <div className="mx-1 mt-[3px] flex min-h-0 flex-1 basis-0 overflow-hidden border border-[#9b9b9b] bg-white">
          <ul className="min-w-0 flex-1 pt-px">
            {OBJECTS.map((o, i) => (
              <li key={i} className={clsx("flex h-[31px] items-center border-b border-[#e2e2e2]", INDENT[o.level])}>
                {o.icon}
                <div className="ml-1 flex-1 whitespace-nowrap">
                  <p className="text-[10px] leading-3 text-[#333]">{o.name}</p>
                  <p className="leading-3 text-[#555]">{o.size}</p>
                </div>
                <button aria-label={`Видимость: ${o.name}`} className="mr-1.5">
                  <ListEye />
                </button>
              </li>
            ))}
          </ul>
          <div className="flex w-3.5 justify-center bg-[#f0f0f0] pt-[37px]">
            <div className="h-[186px] w-0.5 rounded bg-[#8a8a8a]" />
          </div>
        </div>
      </div>
    </aside>
  );
}

export default function App() {
  const [mode, setMode] = useState("plan");
  return (
    <div className="flex h-screen flex-col bg-[#f0f0f0] font-['DejaVu_Sans_Condensed','Noto_Sans',sans-serif] text-[9px]">
      <TitleBar />
      <nav className="flex h-4 items-center gap-[11px] bg-white pt-px pl-1.5 text-[#222]">
        {MENU.map((m) => (
          <button key={m}>{m}</button>
        ))}
      </nav>
      <Toolbar />
      <div className="flex min-h-0 flex-1">
        <ModeBar mode={mode} setMode={setMode} />
        <PlanCanvas />
        <SidePanel />
      </div>
    </div>
  );
}
